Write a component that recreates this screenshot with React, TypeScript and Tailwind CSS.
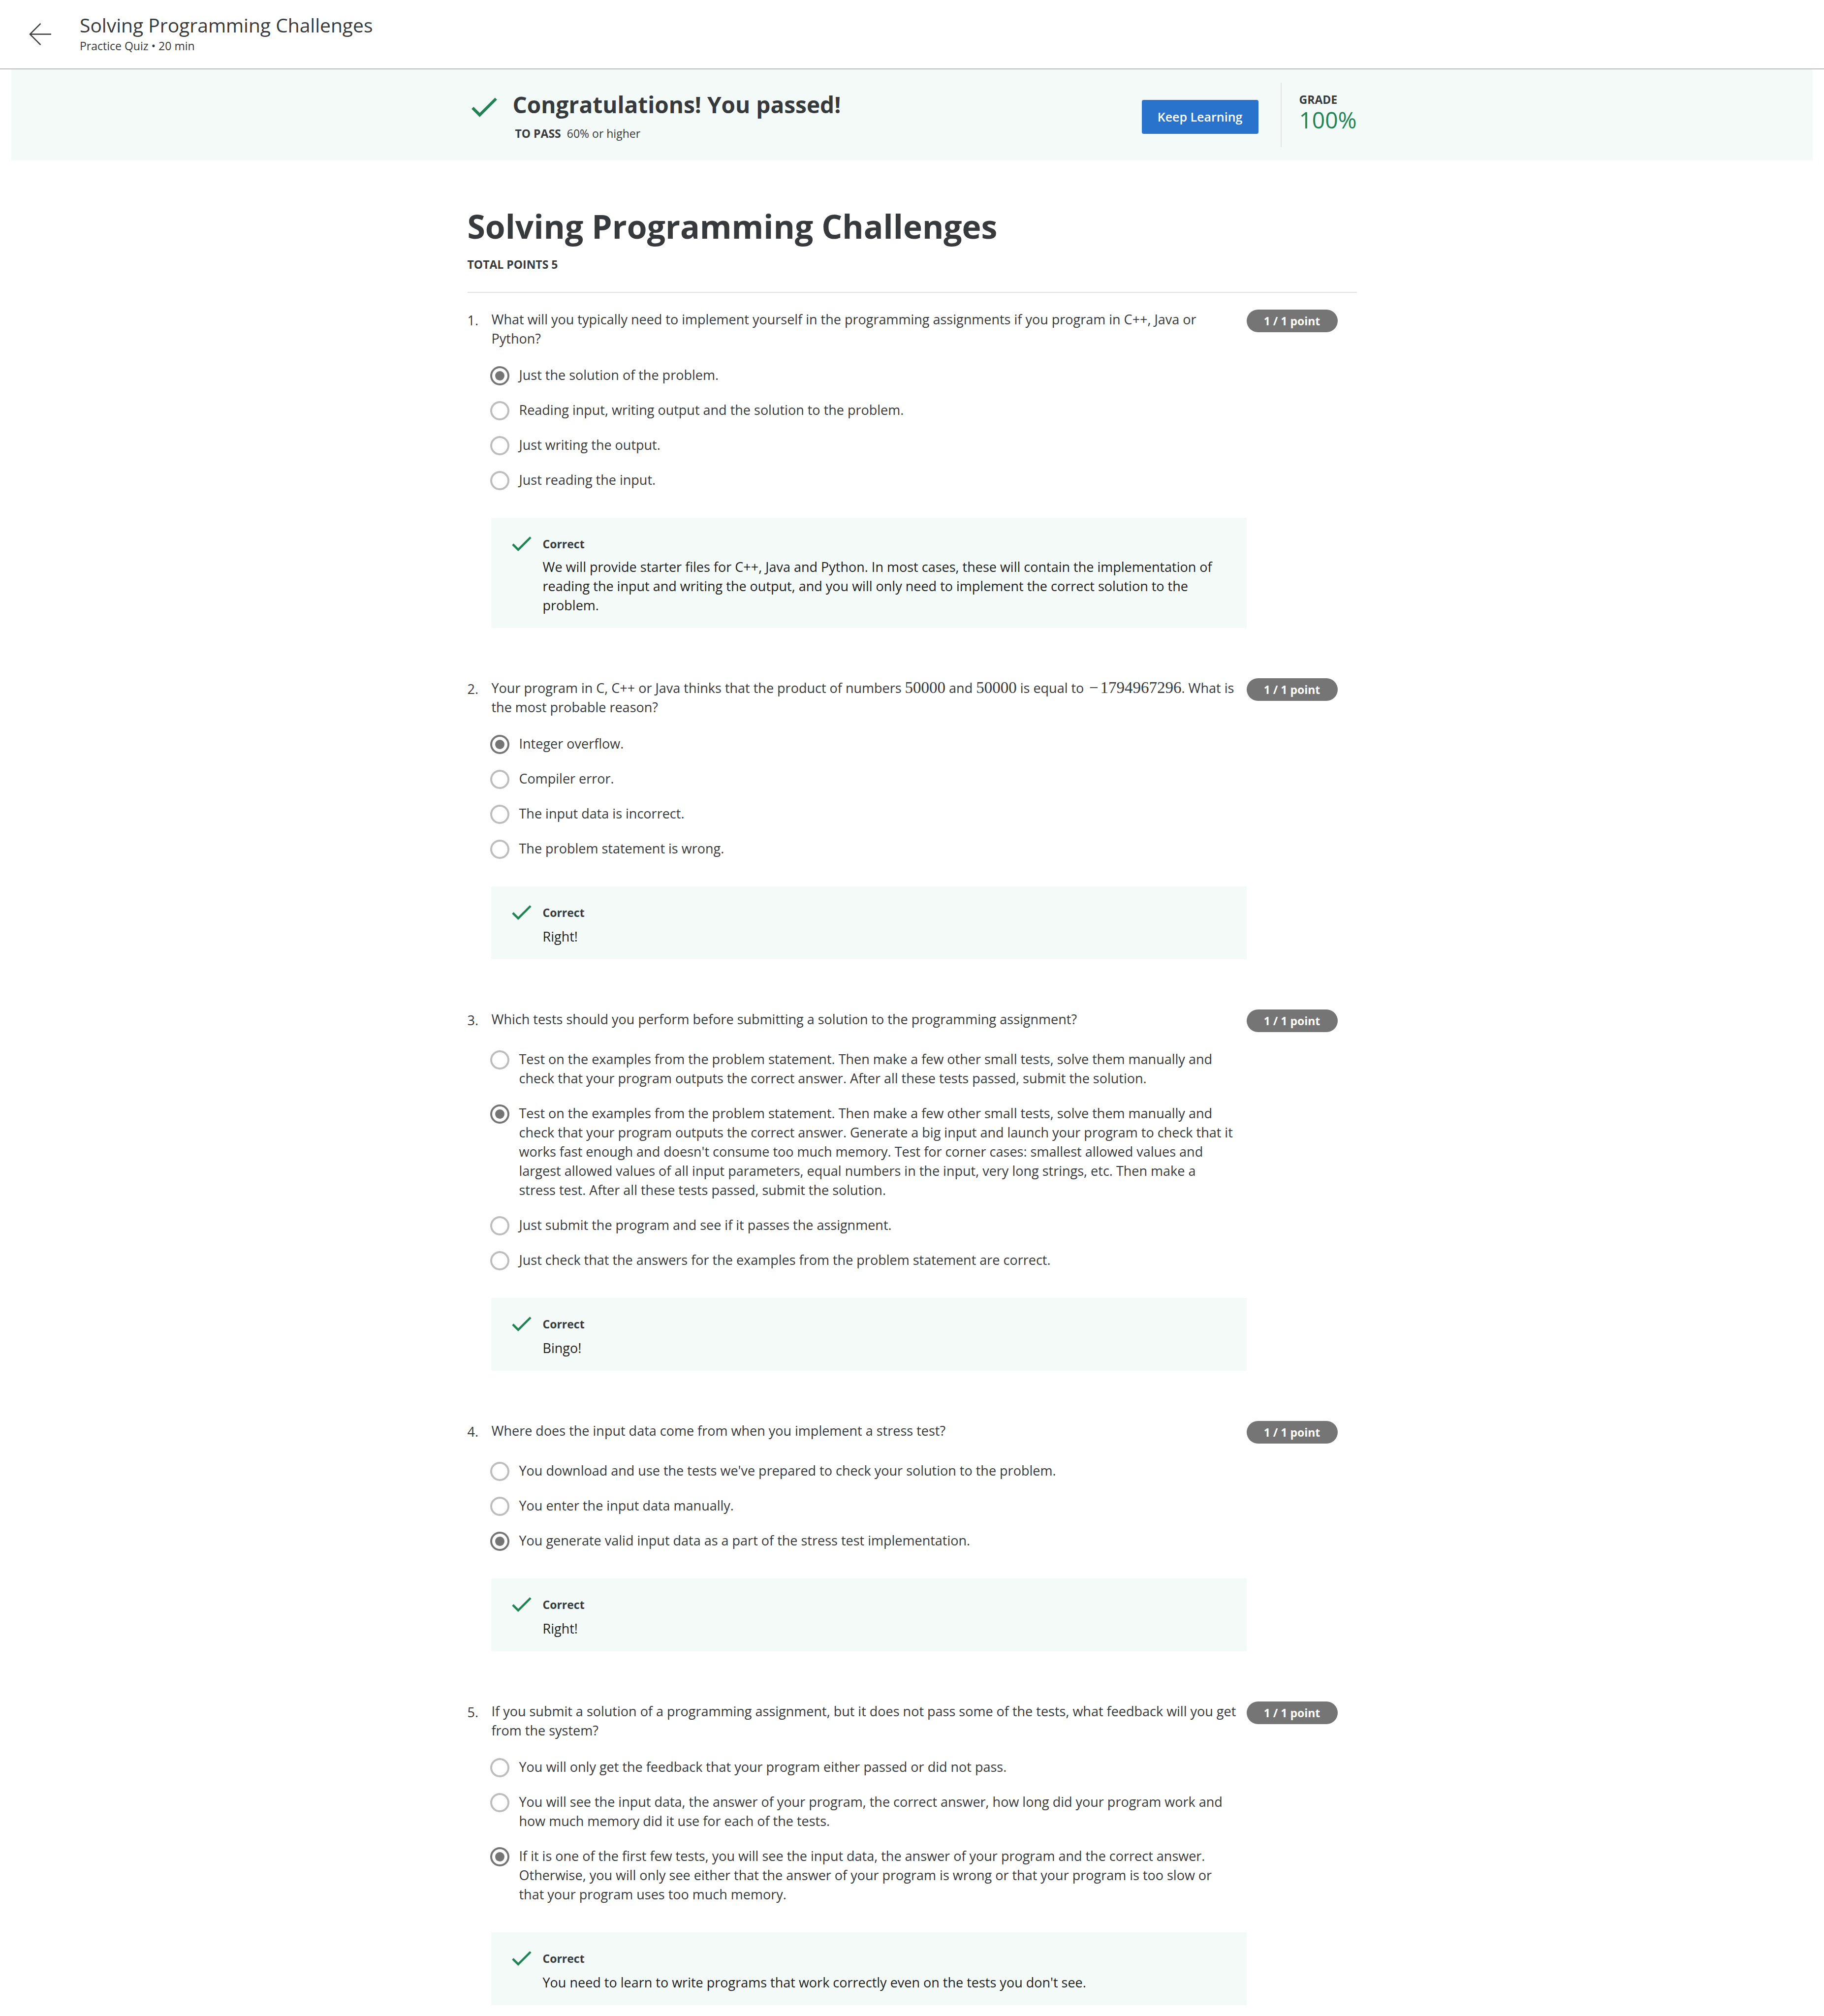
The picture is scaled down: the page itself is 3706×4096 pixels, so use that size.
import React from "react";

type Option = { text: string; checked?: boolean };
type Question = {
  prompt: React.ReactNode;
  options: Option[];
  feedback: string;
};

function MathNumber({ value, negative }: { value: string; negative?: boolean }) {
  return (
    <span className="whitespace-nowrap font-['Liberation_Serif',serif] text-[33px] leading-none">
      {negative && <span className="inline-block w-[26px] text-center">−</span>}
      {value}
    </span>
  );
}

const questions: Question[] = [
  {
    prompt:
      "What will you typically need to implement yourself in the programming assignments if you program in C++, Java or Python?",
    options: [
      { text: "Just the solution of the problem.", checked: true },
      { text: "Reading input, writing output and the solution to the problem." },
      { text: "Just writing the output." },
      { text: "Just reading the input." },
    ],
    feedback:
      "We will provide starter files for C++, Java and Python. In most cases, these will contain the implementation of reading the input and writing the output, and you will only need to implement the correct solution to the problem.",
  },
  {
    prompt: (
      <>
        Your program in C, C++ or Java thinks that the product of numbers <MathNumber value="50000" /> and{" "}
        <MathNumber value="50000" /> is equal to <MathNumber value="1794967296" negative />. What is the most probable
        reason?
      </>
    ),
    options: [
      { text: "Integer overflow.", checked: true },
      { text: "Compiler error." },
      { text: "The input data is incorrect." },
      { text: "The problem statement is wrong." },
    ],
    feedback: "Right!",
  },
  {
    prompt: "Which tests should you perform before submitting a solution to the programming assignment?",
    options: [
      {
        text: "Test on the examples from the problem statement. Then make a few other small tests, solve them manually and check that your program outputs the correct answer. After all these tests passed, submit the solution.",
      },
      {
        text: "Test on the examples from the problem statement. Then make a few other small tests, solve them manually and check that your program outputs the correct answer. Generate a big input and launch your program to check that it works fast enough and doesn't consume too much memory. Test for corner cases: smallest allowed values and largest allowed values of all input parameters, equal numbers in the input, very long strings, etc. Then make a stress test. After all these tests passed, submit the solution.",
        checked: true,
      },
      { text: "Just submit the program and see if it passes the assignment." },
      { text: "Just check that the answers for the examples from the problem statement are correct." },
    ],
    feedback: "Bingo!",
  },
  {
    prompt: "Where does the input data come from when you implement a stress test?",
    options: [
      { text: "You download and use the tests we've prepared to check your solution to the problem." },
      { text: "You enter the input data manually." },
      { text: "You generate valid input data as a part of the stress test implementation.", checked: true },
    ],
    feedback: "Right!",
  },
  {
    prompt:
      "If you submit a solution of a programming assignment, but it does not pass some of the tests, what feedback will you get from the system?",
    options: [
      { text: "You will only get the feedback that your program either passed or did not pass." },
      {
        text: "You will see the input data, the answer of your program, the correct answer, how long did your program work and how much memory did it use for each of the tests.",
      },
      {
        text: "If it is one of the first few tests, you will see the input data, the answer of your program and the correct answer. Otherwise, you will only see either that the answer of your program is wrong or that your program is too slow or that your program uses too much memory.",
        checked: true,
      },
    ],
    feedback: "You need to learn to write programs that work correctly even on the tests you don't see.",
  },
];

function CheckIcon({ className }: { className: string }) {
  return (
    <svg viewBox="0 0 54 41" fill="none" stroke="#1f8354" strokeWidth="6" className={className} aria-hidden="true">
      <path d="M2.2 21.7 L17.3 36.7 L51.7 2.3" />
    </svg>
  );
}

function Header() {
  return (
    <header className="flex h-[141px] items-start gap-[58px] border-b-2 border-[#bbbdbd] bg-white pl-[59px] pt-[25px]">
      <button type="button" aria-label="Back" className="mt-[22px] size-[45px] shrink-0">
        <svg viewBox="0 0 46 46" fill="none" stroke="#373a3c" strokeWidth="2.5" className="size-full">
          <path d="M24 1 L2 23 L24 45 M1.5 23 H46" />
        </svg>
      </button>
      <div>
        <p className="text-[39px] leading-[52px]">Solving Programming Challenges</p>
        <p className="text-[23px] leading-[32px]">Practice Quiz • 20 min</p>
      </div>
    </header>
  );
}

function ResultBanner() {
  return (
    <section className="mx-[23px] h-[185px] bg-[#f3faf8] pt-[27px]">
      <div className="mx-auto flex max-w-[1807px] items-start">
        <CheckIcon className="ml-[8px] mt-[30px] h-[40px] w-[52px] shrink-0" />
        <div className="ml-[32px] mt-[13px] flex-1">
          <h2 className="text-[46px] font-bold leading-[62px]">Congratulations! You passed!</h2>
          <p className="mt-[12px] flex gap-[12px] pl-[5px] text-[23px] leading-[32px]">
            <strong className="font-bold">TO PASS</strong>
            <span>60% or higher</span>
          </p>
        </div>
        <button
          type="button"
          className="mt-[35px] h-[69px] w-[237px] rounded-[4px] bg-[#2a73cc] text-[25px] font-semibold text-white"
        >
          Keep Learning
        </button>
        <div className="ml-[45px] h-[131px] border-l-2 border-[#dfe3e2] pl-[36px] pt-[18px]">
          <p className="text-[23px] font-bold leading-[32px]">GRADE</p>
          <p className="text-[46px] leading-[50px] text-[#1f8354]">100%</p>
        </div>
      </div>
    </section>
  );
}

function Feedback({ text }: { text: string }) {
  return (
    <div className="mt-[58px] flex bg-[#f3faf8] px-[42px] pb-[27px] pt-[37px]">
      <CheckIcon className="mt-[1px] h-[30px] w-[40px] shrink-0" />
      <div className="ml-[23px] flex-1">
        <p className="text-[23px] font-bold leading-[32px]">Correct</p>
        <p className={`${text.length > 100 ? "mt-[11px]" : "mt-[13px]"} text-[27px] leading-[39px] text-[#1f1f1f]`}>
          {text}
        </p>
      </div>
    </div>
  );
}

function QuestionBlock({ question, index }: { question: Question; index: number }) {
  const promptId = `prompt-${index}`;
  return (
    <li className="flex items-start pr-[39px]">
      <span className="mt-[2px] w-[48px] shrink-0 text-[27px] leading-[39px]">{index + 1}.</span>
      <div className="min-w-0 flex-1">
        <p id={promptId} className="min-h-[46px] pl-[1px] text-[27px] leading-[39px]">
          {question.prompt}
        </p>
        <div role="radiogroup" aria-labelledby={promptId} className="mt-[35px] flex flex-col gap-[32px]">
          {question.options.map((option) => (
            <label key={option.text} className="flex items-start gap-[20px] pr-[26px] text-[27px] leading-[39px]">
              <input
                type="radio"
                name={promptId}
                defaultChecked={option.checked}
                className="-mb-[2px] -ml-[2px] mt-[2px] grid size-[39px] shrink-0 appearance-none place-items-center rounded-full border-4 border-[#bdbdbd] bg-white checked:border-[#757575] checked:before:size-[19px] checked:before:rounded-full checked:before:bg-[#757575] checked:before:content-['']"
              />
              <span>{option.text}</span>
            </label>
          ))}
        </div>
        <Feedback text={question.feedback} />
      </div>
      <span className="w-[185px] shrink-0 rounded-full bg-[#757575] text-center text-[23px] font-bold leading-[46px] text-white">
        1 / 1 point
      </span>
    </li>
  );
}

export default function App() {
  return (
    <div className="min-h-screen bg-white font-['Open_Sans',sans-serif] text-[#373a3c]">
      <Header />
      <ResultBanner />
      <main className="mx-auto max-w-[1807px] pb-[22px] pt-[88px]">
        <div className="border-b-2 border-[#e1e1e1] pb-[40px]">
          <h1 className="text-[66px] font-bold leading-[90px]">Solving Programming Challenges</h1>
          <p className="mt-[17px] text-[23px] font-bold leading-[32px]">TOTAL POINTS 5</p>
        </div>
        <ol className="mt-[34px] flex flex-col gap-[102px]">
          {questions.map((question, index) => (
            <QuestionBlock key={index} question={question} index={index} />
          ))}
        </ol>
      </main>
    </div>
  );
}
